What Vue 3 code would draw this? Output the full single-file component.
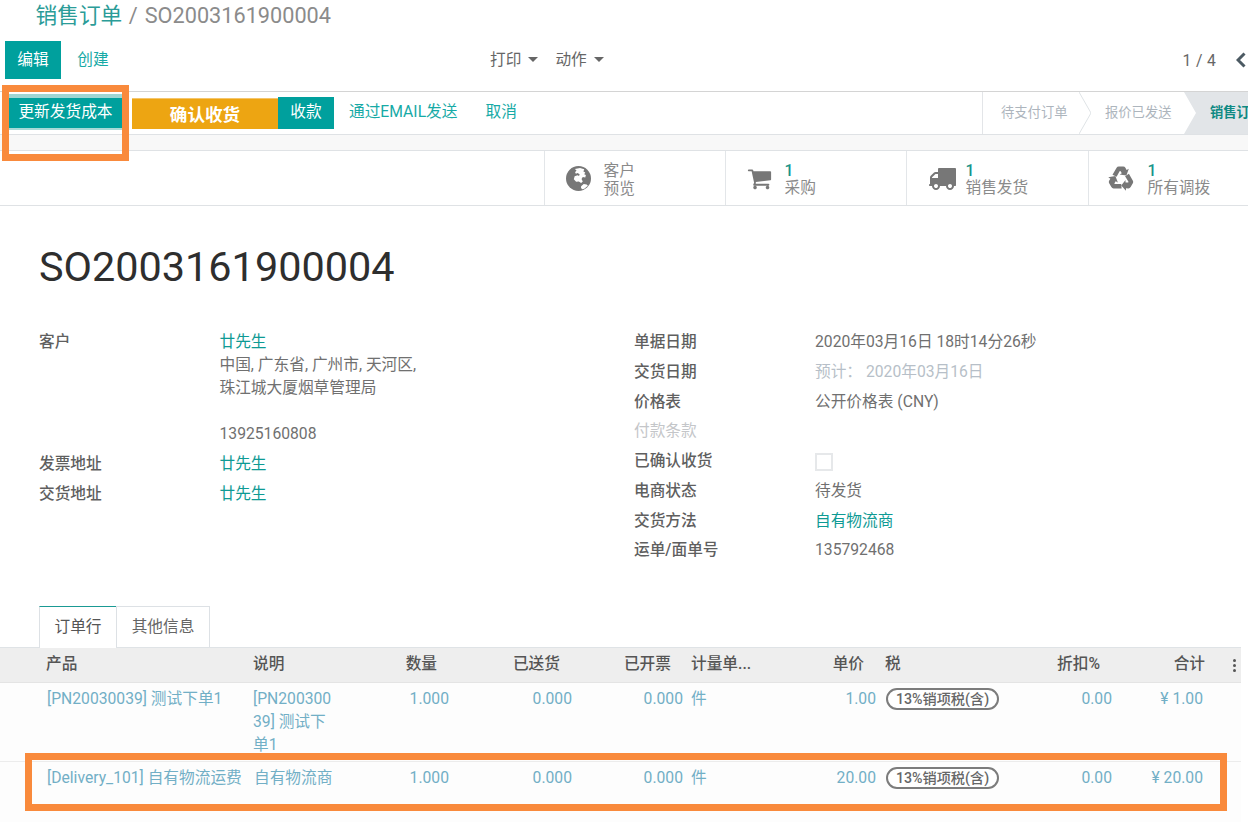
<script setup>
const leftRows = [
  { label: '发票地址', value: '廿先生' },
  { label: '交货地址', value: '廿先生' },
]
const rightRows = [
  { label: '单据日期', value: '2020年03月16日 18时14分26秒' },
  { label: '交货日期', value: '预计： 2020年03月16日', kind: 'muted' },
  { label: '价格表', value: '公开价格表 (CNY)' },
  { label: '付款条款', value: '', labelKind: 'faint' },
  { label: '已确认收货', kind: 'check' },
  { label: '电商状态', value: '待发货' },
  { label: '交货方法', value: '自有物流商', kind: 'link' },
  { label: '运单/面单号', value: '135792468' },
]
const lines = [
  { product: '[PN20030039] 测试下单1', desc: '[PN20030039] 测试下单1', price: '1.00', total: '¥ 1.00' },
  { product: '[Delivery_101] 自有物流运费', desc: '自有物流商', price: '20.00', total: '¥ 20.00' },
]
const recycleTurns = [0, 120, 240]
</script>

<template>
  <div class="page">
    <div class="crumb"><span class="crumb-link">销售订单</span><span class="crumb-sep">/</span><span>SO2003161900004</span></div>

    <div class="controls">
      <div class="main-btns">
        <button class="btn primary edit">编辑</button>
        <button class="btn link create">创建</button>
      </div>
      <div class="menus">
        <span class="menu">打印<i class="caret"></i></span>
        <span class="menu">动作<i class="caret"></i></span>
      </div>
      <div class="pager">
        <span>1 / 4</span>
        <svg class="chev" viewBox="0 0 10 16"><path d="M8.5 1.5 2 8l6.5 6.5" fill="none" stroke="#4c5a63" stroke-width="3"/></svg>
      </div>
    </div>

    <div class="statusbar">
      <button class="btn update">更新发货成本</button>
      <button class="btn confirm">确认收货</button>
      <button class="btn primary pay">收款</button>
      <button class="btn link mail">通过EMAIL发送</button>
      <button class="btn link cancel">取消</button>
      <div class="steps">
        <div class="step first">待支付订单
          <svg class="step-arrow" viewBox="0 0 12 42" preserveAspectRatio="none"><path d="M0 0 12 21 0 42" fill="none" stroke="#dfe3e6"/></svg>
        </div>
        <div class="step second">报价已发送</div>
        <div class="step active">销售订单</div>
      </div>
    </div>
    <div class="strip"></div>

    <div class="stats">
      <div class="stat">
        <svg class="stat-icon" viewBox="0 0 24 24">
          <circle cx="12" cy="12" r="12" fill="#777"/>
          <path d="M8.5 2.8 13.5 2l4 1.2-.8 2 1.8 1-1 1.8 1.6.6-.6 2.4-2.4-.4-1.2 1.8 1.2 2.4-1.6 1.6-2.2-1.6-2.6.2-2.2-2.4.8-2.8 2.8-1 1.4.8.6-1.6-2-1.2-1.6.6-.8-1.4 1.4-1.6Z" fill="#fff"/>
          <path d="m14.5 19.5 2.5-2.2 2.8.4 1.2 1.2-3.4 3-2.2.4-1-1.4Z" fill="#fff"/>
        </svg>
        <div class="stat-text"><span class="stat-line">客户</span><span class="stat-line">预览</span></div>
      </div>
      <div class="stat">
        <svg class="stat-icon" viewBox="0 0 1792 1792"><path fill="#777" d="M704 1536q0 52-38 90t-90 38-90-38-38-90 38-90 90-38 90 38 38 90zm896 0q0 52-38 90t-90 38-90-38-38-90 38-90 90-38 90 38 38 90zm128-1088v512q0 24-16.5 42.5t-40.5 21.5l-1044 122q13 60 13 70 0 16-24 64h920q26 0 45 19t19 45-19 45-45 19h-1024q-26 0-45-19t-19-45q0-11 8-31.5t16-36 21.5-40 15.5-29.5l-177-823h-204q-26 0-45-19t-19-45 19-45 45-19h256q16 0 28.5 6.5t19.5 15.5 13 24.5 8 26 5.5 29.5 4.5 26h1201q26 0 45 19t19 45z"/></svg>
        <div class="stat-text"><span class="stat-num">1</span><span class="stat-line">采购</span></div>
      </div>
      <div class="stat">
        <svg class="stat-icon truck" viewBox="0 0 1792 1792"><path fill="#777" d="M640 1408q0-52-38-90t-90-38-90 38-38 90 38 90 90 38 90-38 38-90zm-384-512h384v-256h-158q-13 0-22 9l-195 195q-9 9-9 22v30zm1280 512q0-52-38-90t-90-38-90 38-38 90 38 90 90 38 90-38 38-90zm256-1088v1024q0 15-4 26.5t-13.5 18.5-16.5 11.5-23.5 6-22.5 2-25.5 0-22.5-.5q0 106-75 181t-181 75-181-75-75-181h-384q0 106-75 181t-181 75-181-75-75-181h-64q-3 0-22.5.5t-25.5 0-22.5-2-23.5-6-16.5-11.5-13.5-18.5-4-26.5q0-26 19-45t45-19v-320q0-8-.5-35t0-38 2.5-34.5 6.5-37 14-30.5 22.5-30l198-198q19-19 50.5-32t58.5-13h160v-192q0-26 19-45t45-19h1024q26 0 45 19t19 45z"/></svg>
        <div class="stat-text"><span class="stat-num">1</span><span class="stat-line">销售发货</span></div>
      </div>
      <div class="stat">
        <svg class="stat-icon recycle" viewBox="0 0 26 26">
          <path
            v-for="a in recycleTurns"
            :key="a"
            :transform="`rotate(${a} 13 14)`"
            fill="#777"
            d="M4.5 9.8 8.6 2.8Q9.3 1.6 10.8 1.6H15.2Q16.7 1.6 17.4 2.8L18.6 5 20.8 3.8 18.4 10.6 11.6 9.6 13.8 8.3 12.6 6.2Q12.2 5.6 11.6 6.2L8.6 11.8Z"
          />
        </svg>
        <div class="stat-text"><span class="stat-num">1</span><span class="stat-line">所有调拨</span></div>
      </div>
    </div>

    <h1 class="title">SO2003161900004</h1>

    <div class="form">
      <div class="form-col left">
        <div class="row">
          <div class="label">客户</div>
          <div class="value">
            <div class="link-text">廿先生</div>
            <div>中国, 广东省, 广州市, 天河区,</div>
            <div>珠江城大厦烟草管理局</div>
            <div class="blank"></div>
            <div>13925160808</div>
          </div>
        </div>
        <div v-for="r in leftRows" :key="r.label" class="row">
          <div class="label">{{ r.label }}</div>
          <div class="value link-text">{{ r.value }}</div>
        </div>
      </div>
      <div class="form-col">
        <div v-for="r in rightRows" :key="r.label" class="row">
          <div class="label" :class="r.labelKind">{{ r.label }}</div>
          <div class="value" :class="{ 'link-text': r.kind === 'link', muted: r.kind === 'muted' }">
            <span v-if="r.kind === 'check'" class="check"></span>
            <template v-else>{{ r.value }}</template>
          </div>
        </div>
      </div>
    </div>

    <div class="tabs">
      <div class="tab on">订单行</div>
      <div class="tab">其他信息</div>
    </div>

    <table class="lines">
      <colgroup>
        <col class="c1" /><col class="c2" /><col class="c3" /><col class="c4" /><col class="c5" /><col class="c6" /><col class="c7" /><col class="c8" /><col class="c9" /><col class="c10" /><col class="c11" />
      </colgroup>
      <thead>
        <tr>
          <th class="first">产品</th>
          <th>说明</th>
          <th class="num">数量</th>
          <th class="num">已送货</th>
          <th class="num">已开票</th>
          <th class="unit">计量单...</th>
          <th class="num">单价</th>
          <th class="tax">税</th>
          <th class="num">折扣%</th>
          <th class="num total">合计</th>
          <th class="dots-cell"><span class="dots"><i></i><i></i><i></i></span></th>
        </tr>
      </thead>
      <tbody>
        <tr v-for="l in lines" :key="l.product">
          <td class="first">{{ l.product }}</td>
          <td class="desc">{{ l.desc }}</td>
          <td class="num">1.000</td>
          <td class="num">0.000</td>
          <td class="num">0.000</td>
          <td class="unit">件</td>
          <td class="num">{{ l.price }}</td>
          <td class="tax"><span class="badge">13%销项税(含)</span></td>
          <td class="num">0.00</td>
          <td class="num amount">{{ l.total }}</td>
          <td></td>
        </tr>
      </tbody>
    </table>

    <div class="mark mark-btn"></div>
    <div class="mark mark-row"></div>
  </div>
</template>

<style>
html, body { margin: 0; background: #fff; }
</style>

<style scoped>
.page {
  position: relative;
  width: 1248px;
  height: 830px;
  overflow: hidden;
  background: #fff;
  color: #666;
  font: 400 15.7px/23px Roboto, "Noto Sans CJK SC", sans-serif;
}
.crumb {
  height: 30px;
  padding-left: 35.5px;
  font-size: 21.7px;
  line-height: 31px;
  color: #8b8b8b;
}
.crumb-link { color: #2b9c98; }
.crumb-sep { margin: 0 7px 0 6.5px; }

.btn {
  border: 0;
  padding: 0;
  background: none;
  font: inherit;
  cursor: pointer;
}
.primary { background: #00a09d; color: #fff; }
.link { color: #17aaa6; }

.controls {
  display: flex;
  align-items: flex-start;
  height: 38px;
  margin-top: 11px;
  padding: 0 0 12px 5px;
  overflow: hidden;
}
.main-btns { display: flex; width: 485px; }
.edit { width: 56px; height: 38px; padding-bottom: 2px; }
.create { width: 64px; height: 38px; padding-bottom: 2px; }
.menus { display: flex; gap: 17px; height: 36px; align-items: center; color: #666; }
.menu { display: flex; align-items: center; gap: 7px; }
.caret {
  width: 0;
  height: 0;
  border: 5px solid transparent;
  border-top: 5px solid #666;
  border-bottom: 0;
}
.pager {
  display: flex;
  align-items: center;
  gap: 20px;
  height: 38px;
  margin-left: auto;
  letter-spacing: 0.3px;
  padding-right: 2px;
}
.chev { width: 10px; height: 16px; display: block; }

.statusbar {
  display: flex;
  align-items: flex-start;
  height: 42px;
  border-top: 1px solid #d4d4d4;
  border-bottom: 1px solid #dfe2e5;
  padding-left: 9px;
}
.update {
  width: 113px;
  height: 36px;
  margin-top: 2px;
  box-sizing: border-box;
  border-top: 4px solid #9fd6d3;
  border-bottom: 2px solid #a8dad7;
  background: #00a09d;
  color: #fff;
  line-height: 26px;
  padding-bottom: 3px;
  font-size: 15.7px;
}
.confirm {
  width: 146px;
  height: 31px;
  margin: 6px 0 0 10px;
  padding-top: 3px;
  background: #eda512;
  color: #fff;
  font-size: 17.6px;
  font-weight: 700;
  box-shadow: inset 0 1px 0 #f5c56a;
}
.pay { width: 56px; height: 32px; margin: 5px 0 0 0; padding-bottom: 4px; }
.mail { margin: 5px 0 0 15px; height: 32px; padding-bottom: 4px; }
.cancel { margin: 5px 0 0 28px; height: 32px; padding-bottom: 4px; }

.steps {
  display: flex;
  width: 266px;
  height: 42px;
  margin-left: auto;
  border-left: 1px solid #e3e5e8;
  box-sizing: border-box;
  font-size: 13.3px;
  line-height: 41px;
  color: #adb5bd;
  overflow: hidden;
  white-space: nowrap;
}
.step { position: relative; flex: none; }
.step.first { width: 96px; padding-left: 18px; box-sizing: border-box; }
.step-arrow { position: absolute; left: 96px; top: 0; width: 12px; height: 42px; }
.step.second { width: 105px; padding-left: 26px; box-sizing: border-box; }
.step.active {
  width: 100px;
  padding-left: 26px;
  box-sizing: border-box;
  background: #e2e5e8;
  color: #0f8a83;
  font-weight: 700;
  clip-path: polygon(0 0, 100% 0, 100% 100%, 0 100%, 12px 50%);
}

.strip {
  height: 15px;
  background: #f8f8f8;
  border-bottom: 1px solid #dfe2e5;
}

.stats {
  display: grid;
  grid-template-columns: 181px 181px 182px 160px;
  height: 54px;
  padding-left: 544px;
  border-bottom: 1px solid #dfe2e5;
}
.stat {
  display: flex;
  align-items: center;
  border-left: 1px solid #e3e6e9;
  padding-left: 21px;
  gap: 12.5px;
  color: #8a8a8a;
}
.stat-icon { width: 25px; height: 25px; flex: none; }
.stat-icon.truck { width: 28px; height: 28px; margin-right: -3px; }
.stat-icon.recycle { overflow: visible; width: 26px; height: 26px; margin: 0 1px 0 -2px; }
.stat-text { display: flex; flex-direction: column; line-height: 18px; padding-top: 3px; }
.stat-line { font-size: 15.7px; }
.stat-num { color: #19958b; font-weight: 500; font-size: 15.7px; line-height: 17px; }

.title {
  margin: 36px 0 34.6px 39px;
  font-size: 41.4px;
  font-weight: 400;
  line-height: 50px;
  color: #2e2e2e;
}

.form {
  display: grid;
  grid-template-columns: 595px 1fr;
  padding-left: 39px;
}
.row {
  display: grid;
  grid-template-columns: 181px 1fr;
  padding: 3.4px 0;
}
.left .row { grid-template-columns: 180.5px 1fr; }
.label { font-weight: 500; color: #5f5f5f; }
.label.faint { color: #c4c6c9; font-weight: 400; }
.value { color: #707070; }
.link-text { color: #0e9a94; }
.muted { color: #b7bfc8; }
.blank { height: 23px; }
.check {
  display: block;
  width: 14px;
  height: 14px;
  margin-top: 4px;
  border: 2px solid #e6e8ea;
}

.tabs {
  display: flex;
  margin: 41px 0 0 39px;
  position: relative;
  z-index: 1;
}
.tab {
  box-sizing: border-box;
  height: 41px;
  padding-top: 8px;
  width: 94px;
  border: 1px solid #dde1e5;
  border-bottom: 0;
  color: #666;
  text-align: center;
}
.tab.on {
  width: 77px;
  height: 42px;
  margin-bottom: -1px;
  border-top: 1px solid #1a9a94;
  border-right: 0;
  background: #fff;
  color: #555;
}

.lines {
  table-layout: fixed;
  width: 1241px;
  border-collapse: collapse;
  background: #fdfdfd;
  color: #72afc6;
}
.c1 { width: 253px; }
.c2 { width: 80px; }
.c3 { width: 116px; }
.c4 { width: 123px; }
.c5 { width: 111px; }
.c6 { width: 67px; }
.c7 { width: 126px; }
.c8 { width: 154px; }
.c9 { width: 82px; }
.c10 { width: 93px; }
.c11 { width: 36px; }
th {
  height: 35px;
  padding: 0 0 2px;
  background: #eeeeee;
  border-top: 1px solid #dfe3e6;
  border-bottom: 1px solid #e4e4e4;
  box-sizing: border-box;
  color: #555;
  font-weight: 500;
  text-align: left;
  white-space: nowrap;
}
th.num { text-align: right; padding-right: 12px; }
th.total { padding-right: 0; }
th.first { padding-left: 46px; }
th.tax { padding-left: 9px; }
th.unit { padding-left: 8px; }
td {
  padding: 4.5px 0 0;
  vertical-align: top;
  white-space: nowrap;
}
tbody tr:first-child td { height: 79px; box-sizing: border-box; border-bottom: 1px solid #ececec; }
tbody tr:last-child td { height: 61px; box-sizing: border-box; }
td.first { padding-left: 47px; }
td.desc { white-space: normal; word-break: break-all; }
tbody tr:last-child td.desc { padding-left: 1px; }
td.num { text-align: right; }
td.amount { padding-right: 2px; }
td.unit { padding-left: 8px; }
td.tax { padding-left: 10px; }
.badge {
  display: inline-block;
  box-sizing: border-box;
  height: 22px;
  width: 113px;
  margin-top: 1px;
  border: 2px solid #7c7c7c;
  border-radius: 11px;
  text-align: center;
  font-size: 14.2px;
  font-weight: 500;
  line-height: 18px;
  color: #666;
  background: #fff;
}
.dots-cell { text-align: left; padding-left: 28px; box-sizing: border-box; }
.dots { display: inline-flex; flex-direction: column; gap: 2px; vertical-align: middle; }
.dots i { width: 3px; height: 3px; background: #555; border-radius: 50%; }

.mark {
  position: absolute;
  box-sizing: border-box;
  border: 7.5px solid #f98a3c;
  pointer-events: none;
}
.mark-btn { left: 2px; top: 85px; width: 127px; height: 76px; }
.mark-row { left: 25px; top: 753px; width: 1202px; height: 58px; }
</style>
